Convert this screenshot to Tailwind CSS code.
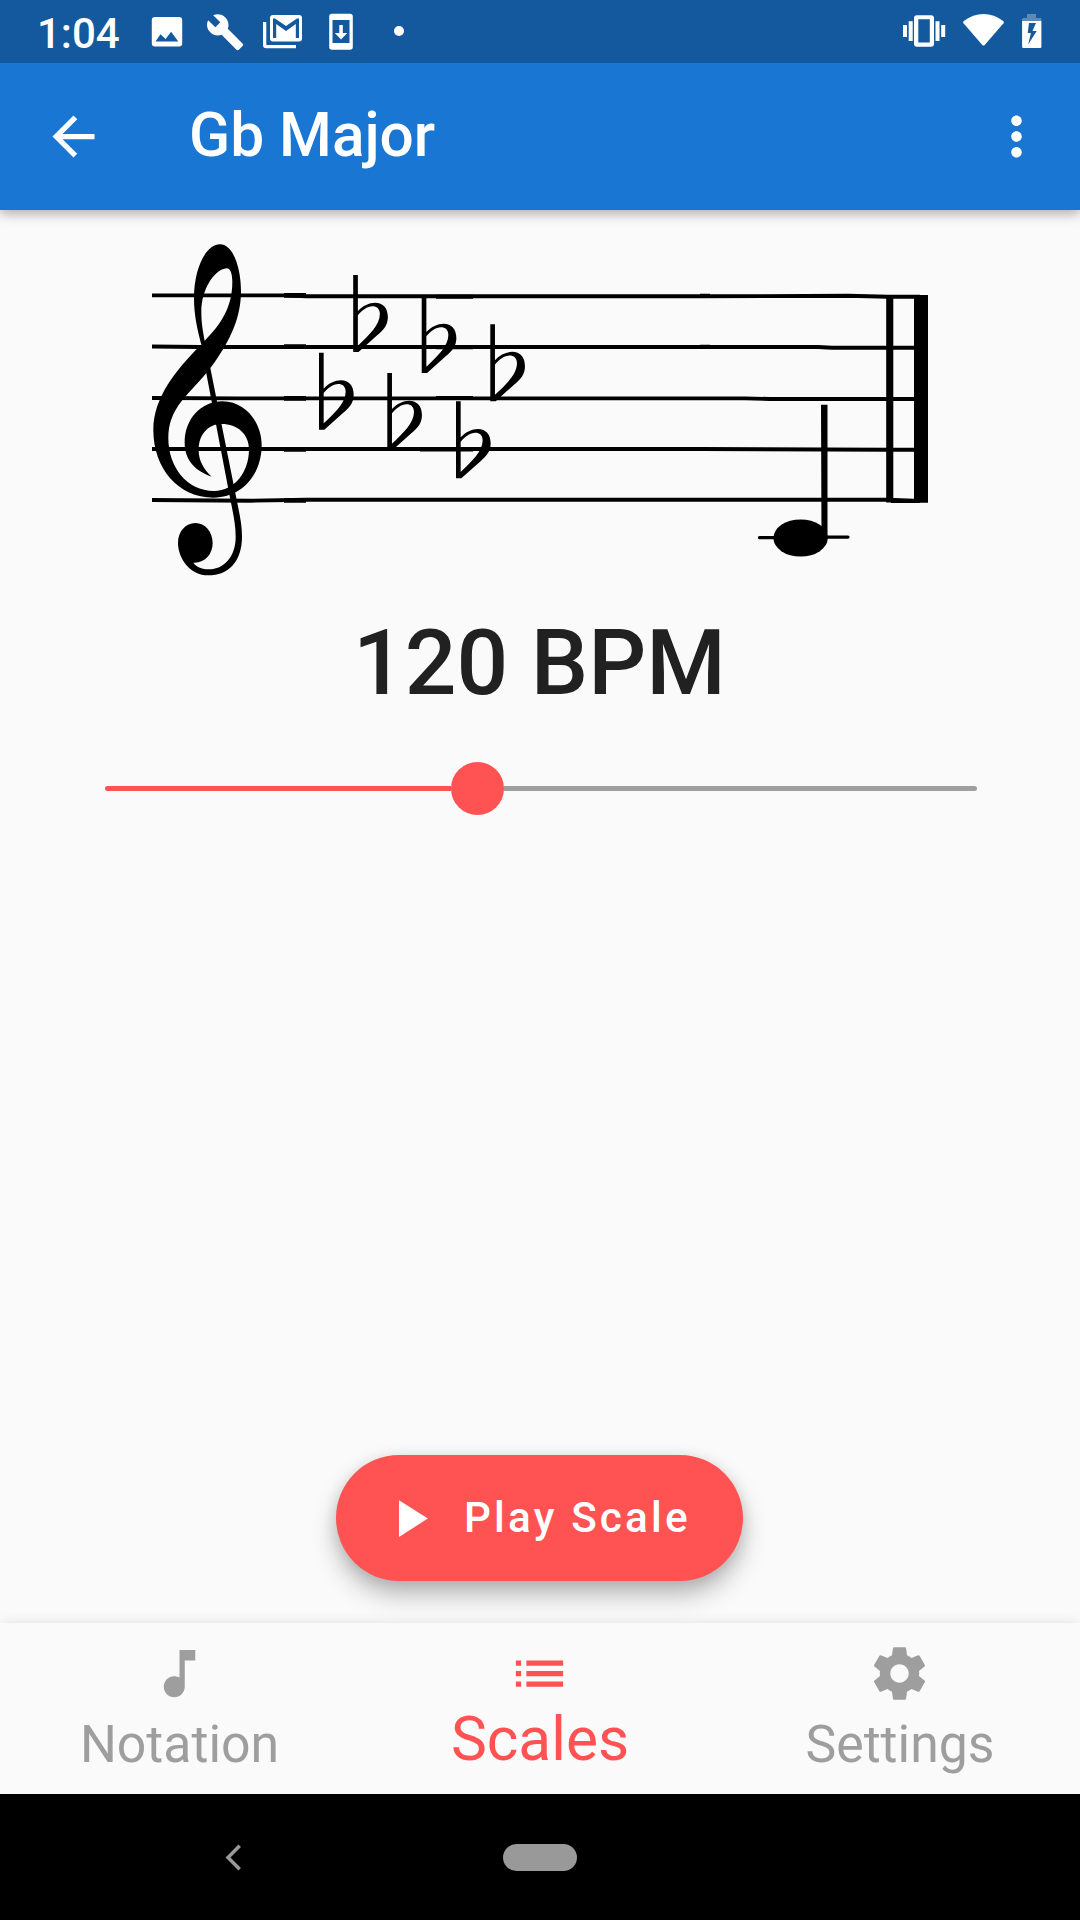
<!DOCTYPE html>
<html lang="en">
<head>
<meta charset="utf-8">
<title>Gb Major</title>
<script src="https://cdn.jsdelivr.net/npm/@tailwindcss/browser@4"></script>
</head>
<body class="bg-[#fafafa] font-['Roboto',sans-serif]">
<div class="flex h-[1920px] w-[1080px] flex-col overflow-hidden bg-[#fafafa]">
  <!-- Status bar -->
  <div class="z-20 flex h-[63px] shrink-0 items-start bg-[#14599d] text-white">
    <span class="ml-[37px] w-[86px] pt-[9px] text-[42px] leading-[50px] font-medium">1:04</span>
    <svg class="h-[63px] w-[957px]" viewBox="123 0 957 63" fill="#fff">
      <path fill-rule="evenodd" d="M155 17h24a3.2 3.2 0 0 1 3.200 3.200v23a3.200 3.200 0 0 1-3.200 3.200h-24a3.200 3.200 0 0 1-3.200-3.200v-23a3.200 3.200 0 0 1 3.200-3.200zM160.500 34.300l-5 7.200h22.800l-7.200-9.700-5.500 7.300z"/>
      <g transform="translate(205.500 12.500) scale(1.640)"><path d="M22.700 19l-9.100-9.100c.9-2.300.4-5-1.500-6.900-2-2-5-2.400-7.400-1.300L9 6 6 9 1.600 4.700C.4 7.100.9 10.100 2.900 12.100c1.900 1.900 4.600 2.400 6.900 1.500l9.100 9.100c.4.4 1 .4 1.400 0l2.300-2.300c.5-.4.5-1.100.1-1.400z"/></g>
      <path d="M263 22h3.300v23H296v3.300H266.300a3.300 3.300 0 0 1-3.300-3.300z"/>
      <path fill-rule="evenodd" d="M273 15h26a3 3 0 0 1 3 3v20.500a3 3 0 0 1-3 3h-26a3 3 0 0 1-3-3V18a3 3 0 0 1 3-3zM273 18.500V38h3.200V24l9.800 7 9.800-7v14h3.200V18.500h-2L286 26l-11-7.500z"/>
      <path fill-rule="evenodd" d="M332 13.700h18a2.800 2.800 0 0 1 2.800 2.800v30.500a2.800 2.800 0 0 1-2.800 2.800h-18a2.800 2.800 0 0 1-2.800-2.800V16.500a2.800 2.800 0 0 1 2.800-2.800zM332.500 20v23h17V20zM339.300 25h3.500v8h4.500l-6.300 6.500-6.200-6.500h4.500z"/>
      <circle cx="399" cy="31" r="5"/>
      <path d="M903 25h4v12h-4zM908.700 21.300h4v19.700h-4zM935.500 21.300h4v19.700h-4zM941.200 25h4v12h-4z"/>
      <path fill-rule="evenodd" d="M917 15.300h14a3 3 0 0 1 3 3v25.400a3 3 0 0 1-3 3h-14a3 3 0 0 1-3-3V18.300a3 3 0 0 1 3-3zM918.300 19.300v23.300h11.500V19.300z"/>
      <path d="M963.500 21.200Q973 14 983.500 14T1003.500 21.200Q1004.300 22.200 1003.500 23.200L984.700 45Q983.500 46.200 982.300 45L963.500 23.200Q962.700 22.200 963.500 21.200z"/>
      <path fill-opacity=".3" d="M1027 14h9v4h4.200a1.200 1.200 0 0 1 1.200 1.200V21h-19.300v-1.800a1.200 1.200 0 0 1 1.200-1.200h3.700z"/>
      <path fill-rule="evenodd" d="M1022.100 21h19.300v25.800a1.200 1.200 0 0 1-1.200 1.200h-16.900a1.200 1.200 0 0 1-1.200-1.200zM1029 23l-1.300 10h3.200l-2.700 11.500 8.500-13.500h-4.200l3.500-8z"/>
    </svg>
  </div>
  <!-- App bar -->
  <div class="z-10 flex h-[147px] shrink-0 items-center bg-[#1976d2] text-white shadow-[0_4px_11px_rgba(0,0,0,0.3)]">
    <svg class="ml-[42px] size-[63px]" viewBox="0 0 24 24" fill="#fff"><path d="M20 11H7.830l5.590-5.590L12 4l-8 8 8 8 1.410-1.410L7.830 13H20v-2z"/></svg>
    <h1 class="mb-[2px] ml-[84px] text-[60.400px] leading-[70px] font-medium">Gb Major</h1>
    <svg class="mr-[32px] ml-auto size-[63px]" viewBox="0 0 24 24" fill="#fff"><path d="M12 8c1.100 0 2-.9 2-2s-.9-2-2-2-2 .9-2 2 .9 2 2 2zm0 2c-1.100 0-2 .9-2 2s.9 2 2 2 2-.9 2-2-.9-2-2-2zm0 6c-1.100 0-2 .9-2 2s.9 2 2 2 2-.9 2-2-.9-2-2-2z"/></svg>
  </div>
  <!-- Content -->
  <main class="flex h-[1413px] shrink-0 flex-col items-center">
    <svg class="h-[390px] w-[1080px] shrink-0" viewBox="0 210 1080 390">
      <defs>
        <path id="flat" d="M0 0H14V108C29 92 48 83 66 83C89 83 104 99 104 126C104 152 90 166 72 181L16 231H0zM14 121V212C48 180 80 150 80 117C80 101 70 94 58 94C42 94 26 106 14 121z" fill-rule="evenodd"/>
      </defs>
      <g stroke="#000" stroke-width="3.900" fill="none">
        <path d="M152 295.400H284L306 296.300H700L848 295.800L888 296.800H920M152 346.500L200 347H306L540 347H818L832 347.700H920M152 398L240 398.400H745L770 399H920M152 449H700L888 449.700H920M152 500L250 500.700L306 499.700H888L920 501"/>
        <path stroke-width="4.800" d="M284 295.400h22M284 346.700h22M284 398.300h22M284 449.400h22M284 500.300h22"/>
        <path d="M436 296.700h37M436 347.200h37M436 398h37M420 449.500h53M700 295.700h10M700 346.800h10"/>
      </g>
      <path d="M886.200 295H893.300V502.500H886.200zM914 295H928V502.700H914z"/>
      <path d="M891 500h27v3h-27z"/>
      <g transform="translate(140 230) scale(.333333)">
        <path fill-rule="evenodd" d="M186 352C172 300 162 255 162 205C162 110 200 43 240 43C278 43 303 110 303 185C303 275 258 350 213 412C180 455 152 480 125 513C98 548 85 580 85 625C85 710 140 783 222 783C285 783 327 725 327 658C327 612 292 582 245 582C203 582 176 615 176 660C176 692 190 716 215 740C165 722 134 690 134 638C134 568 182 514 248 514C314 514 365 575 365 645C365 735 305 803 220 803C115 803 40 715 40 600C40 500 112 418 175 352zM194 332C240 285 277 235 277 155C277 128 270 115 260 115C222 118 184 180 184 245C184 280 189 305 194 332z"/>
        <path d="M197 420L211 414L286 790C297 845 306 880 306 920C306 995 265 1036 205 1036C150 1036 114 985 114 938C114 905 137 879 166 879C195 879 218 905 218 940C218 972 195 1000 160 998C170 1012 188 1018 206 1018C252 1018 287 980 287 920C287 880 278 845 268 793z"/>
      </g>
      <g>
        <use href="#flat" transform="translate(319 352.700) scale(.333333)"/>
        <use href="#flat" transform="translate(353.200 275) scale(.333333)"/>
        <use href="#flat" transform="translate(387.300 373) scale(.333333)"/>
        <use href="#flat" transform="translate(421.700 296) scale(.333333)"/>
        <use href="#flat" transform="translate(456 401.300) scale(.333333)"/>
        <use href="#flat" transform="translate(490.300 324.200) scale(.333333)"/>
      </g>
      <path d="M821 404.700h6.500V538h-6zM759.500 536h32v3.200h-32a1.500 1.500 0 0 1 0-3.200zM815 535.500h33a1.500 1.500 0 0 1 0 3.200h-33z"/>
      <ellipse cx="800.600" cy="538" rx="27.200" ry="18.600"/>
    </svg>
    <h2 class="mt-[9px] mr-[1px] text-[91px] leading-[108px] font-medium text-[#212121]">120 BPM</h2>
    <div class="mt-[45px] ml-[2px] flex h-[53px] w-[872px] items-center">
      <div class="h-[5.500px] w-[346px] rounded-l-full bg-[#ff5252]"></div>
      <div class="size-[53px] shrink-0 rounded-full bg-[#ff5252]"></div>
      <div class="h-[5.500px] grow rounded-r-full bg-[#9e9e9e]"></div>
    </div>
    <button class="mt-auto mr-[1px] mb-[42px] flex h-[126px] w-[407px] items-center rounded-full bg-[#ff5252] pl-[42px] text-white shadow-[0_14px_24px_rgba(0,0,0,0.26),0_2px_14px_rgba(0,0,0,0.1)]">
      <svg class="size-[63px]" viewBox="0 0 24 24" fill="#fff"><path d="M8 5v14l11-7z"/></svg>
      <span class="ml-[23px] text-[42.260px] leading-[50px] font-medium tracking-[3.150px]">Play Scale</span>
    </button>
  </main>
  <!-- Bottom navigation -->
  <nav class="grid h-[171px] shrink-0 grid-cols-3 bg-[#fafafa] text-[#9e9e9e] shadow-[0_0_12px_rgba(0,0,0,0.1)]">
    <a class="flex flex-col items-center pt-[19px]">
      <svg class="mr-[1px] size-[63px]" viewBox="0 0 24 24" fill="currentColor"><path d="M12 3v10.550c-.590-.340-1.270-.550-2-.550-2.210 0-4 1.790-4 4s1.790 4 4 4 4-1.790 4-4V7h4V3h-6z"/></svg>
      <span class="mt-[10px] mr-[1px] text-[51.750px] leading-[60px]">Notation</span>
    </a>
    <a class="flex flex-col items-center pt-[19px] text-[#ff5252]">
      <svg class="mr-[1px] size-[63px]" viewBox="0 0 24 24" fill="currentColor"><path d="M3 13h2v-2H3v2zm0 4h2v-2H3v2zm0-8h2V7H3v2zm4 4h14v-2H7v2zm0 4h14v-2H7v2zM7 7v2h14V7H7z"/></svg>
      <span class="text-[60.400px] leading-[70px]">Scales</span>
    </a>
    <a class="flex flex-col items-center pt-[19px]">
      <svg class="mr-[1px] size-[63px]" viewBox="0 0 24 24" fill="currentColor"><path d="M19.430 12.980c.040-.320.070-.640.070-.980s-.030-.660-.070-.980l2.110-1.650c.190-.150.240-.420.120-.640l-2-3.460c-.120-.220-.390-.300-.610-.220l-2.490 1c-.520-.400-1.080-.730-1.690-.980l-.380-2.650C14.460 2.180 14.250 2 14 2h-4c-.250 0-.460.180-.490.420l-.380 2.650c-.610.250-1.170.590-1.690.980l-2.490-1c-.230-.090-.490 0-.610.220l-2 3.460c-.130.220-.070.490.120.640l2.110 1.650c-.040.320-.070.650-.070.980s.030.660.070.980l-2.110 1.650c-.190.150-.240.420-.120.640l2 3.460c.120.220.390.300.610.220l2.490-1c.520.400 1.080.730 1.690.980l.380 2.650c.030.240.240.420.490.420h4c.250 0 .460-.180.490-.420l.380-2.650c.610-.250 1.170-.590 1.690-.980l2.490 1c.230.090.490 0 .610-.220l2-3.460c.120-.220.070-.490-.120-.640l-2.110-1.650zM12 15.500c-1.930 0-3.500-1.570-3.500-3.500s1.570-3.500 3.500-3.500 3.500 1.570 3.500 3.500-1.570 3.500-3.500 3.500z"/></svg>
      <span class="mt-[10px] text-[51.750px] leading-[60px]">Settings</span>
    </a>
  </nav>
  <!-- System navigation -->
  <div class="flex h-[126px] shrink-0 items-center bg-black">
    <svg class="ml-[225px] h-[27px] w-[17px]" viewBox="0 0 17 27" fill="none" stroke="#999" stroke-width="3.500"><path d="M14.700 1.700L3 13.500L14.700 25.300"/></svg>
    <div class="ml-[261px] h-[27px] w-[74px] rounded-full bg-[#999]"></div>
  </div>
</div>
</body>
</html>
